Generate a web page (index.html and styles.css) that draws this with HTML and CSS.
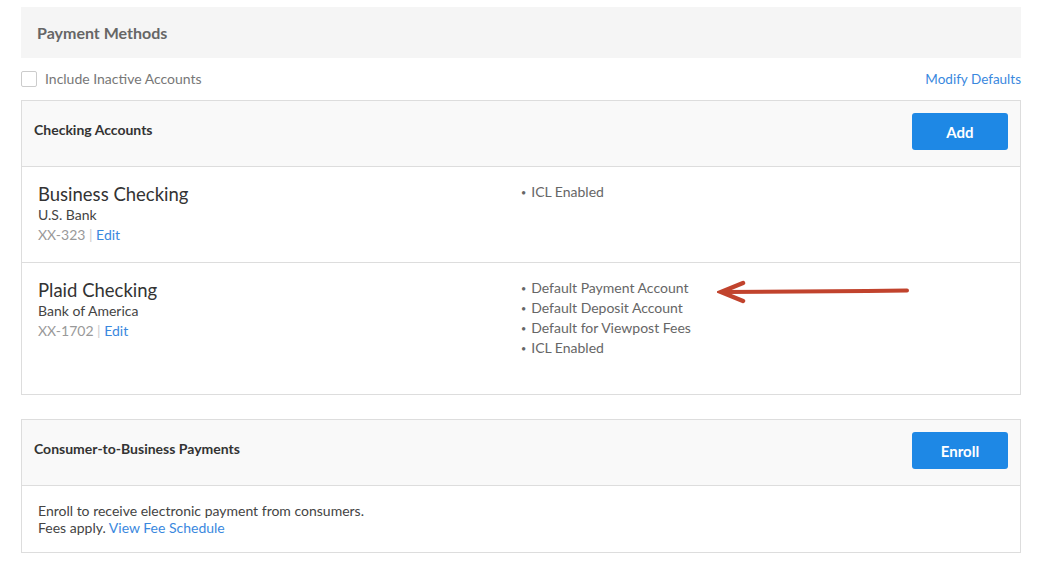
FILE: index.html
```html
<!DOCTYPE html>
<html lang="en">
<head>
    <meta charset="UTF-8">
    <title>Payment Methods</title>
    <link rel="stylesheet" href="styles.css">
</head>
<body>
    <div class="page">
        <div class="page-header">
            <h1>Payment Methods</h1>
        </div>

        <div class="options-row">
            <label class="checkbox-label">
                <span class="checkbox"></span>
                Include Inactive Accounts
            </label>
            <a href="#" class="link defaults-link">Modify Defaults</a>
        </div>

        <div class="panel">
            <div class="panel-header">
                <h2>Checking Accounts</h2>
                <button class="btn-primary">Add</button>
            </div>
            <div class="account-row">
                <div class="account-info">
                    <div class="account-name">Business Checking</div>
                    <div class="bank-name">U.S. Bank</div>
                    <div class="account-meta">XX-323 <span class="sep">|</span> <a href="#" class="link">Edit</a></div>
                </div>
                <ul class="account-flags">
                    <li>ICL Enabled</li>
                </ul>
            </div>
            <div class="account-row tall">
                <div class="account-info">
                    <div class="account-name">Plaid Checking</div>
                    <div class="bank-name">Bank of America</div>
                    <div class="account-meta">XX-1702 <span class="sep">|</span> <a href="#" class="link">Edit</a></div>
                </div>
                <ul class="account-flags">
                    <li>Default Payment Account</li>
                    <li>Default Deposit Account</li>
                    <li>Default for Viewpost Fees</li>
                    <li>ICL Enabled</li>
                </ul>
                <svg class="arrow" width="200" height="24" viewBox="0 0 200 24">
                    <path d="M8 12 L150 11 L190 10.5" stroke="#c1432d" stroke-width="4" fill="none" stroke-linecap="round"/>
                    <path d="M26 3 L4 12 L26 21" stroke="#c1432d" stroke-width="4.5" fill="none" stroke-linecap="round"/>
                </svg>
            </div>
        </div>

        <div class="panel">
            <div class="panel-header">
                <h2>Consumer-to-Business Payments</h2>
                <button class="btn-primary">Enroll</button>
            </div>
            <div class="panel-body">
                Enroll to receive electronic payment from consumers.<br>
                Fees apply. <a href="#" class="link">View Fee Schedule</a>
            </div>
        </div>
    </div>
</body>
</html>
```

FILE: styles.css
```css
body {
    margin: 0;
    font-family: Lato, "Open Sans", sans-serif;
    color: #333;
    background: #fff;
}

.page {
    padding: 7px 24px 0 21px;
}

.page-header {
    background-color: #f5f5f5;
    height: 51px;
    display: flex;
    align-items: center;
    padding-left: 16px;
}

h1 {
    margin: 0;
    font-size: 16px;
    font-weight: bold;
    color: #666;
}

.options-row {
    display: flex;
    justify-content: space-between;
    align-items: center;
    margin-top: 12px;
    height: 17px;
}

.checkbox-label {
    display: flex;
    align-items: center;
    font-size: 14px;
    color: #777;
}

.checkbox {
    width: 14px;
    height: 14px;
    border: 1px solid #ccc;
    border-radius: 2px;
    margin-right: 8px;
}

.link {
    color: #3a88de;
    text-decoration: none;
    font-size: 14px;
}

.defaults-link {
    font-size: 13.5px;
}

.panel {
    border: 1px solid #ddd;
    margin-top: 13px;
}

.panel + .panel {
    margin-top: 24px;
}

.panel-header {
    background-color: #f9f9f9;
    border-bottom: 1px solid #ddd;
    height: 66px;
    display: flex;
    justify-content: space-between;
    align-items: flex-start;
    padding: 12px 12px 0 12px;
    box-sizing: border-box;
}

h2 {
    margin: 0;
    font-size: 14px;
    font-weight: bold;
    color: #333;
    line-height: 34px;
}

.btn-primary {
    background-color: #1e88e5;
    color: #fff;
    border: none;
    border-radius: 3px;
    width: 96px;
    height: 37px;
    font-family: inherit;
    font-size: 15px;
    font-weight: bold;
    cursor: pointer;
}

.account-row {
    display: grid;
    grid-template-columns: 1fr 1fr;
    height: 95px;
    border-bottom: 1px solid #ddd;
    position: relative;
}

.account-row.tall {
    height: 131px;
    border-bottom: none;
}

.account-info {
    padding: 16px 0 0 16px;
}

.account-name {
    font-size: 18.5px;
    color: #333;
    line-height: 22px;
}

.bank-name {
    font-size: 14px;
    color: #444;
    line-height: 20px;
}

.account-meta {
    font-size: 14px;
    color: #999;
    line-height: 20px;
}

.sep {
    color: #ccc;
}

.account-flags {
    list-style: none;
    margin: 0;
    padding: 15px 0 0 0;
    font-size: 14px;
    color: #666;
    line-height: 20px;
}

.account-flags li {
    height: 20px;
}

.account-flags li::before {
    content: "\2022";
    font-size: 9px;
    margin-right: 5px;
    vertical-align: 1px;
    line-height: 1;
}

.arrow {
    position: absolute;
    left: 695px;
    top: 17px;
}

.panel-body {
    padding: 16px 16px 16px 16px;
    font-size: 14px;
    color: #444;
    line-height: 17px;
}
```
